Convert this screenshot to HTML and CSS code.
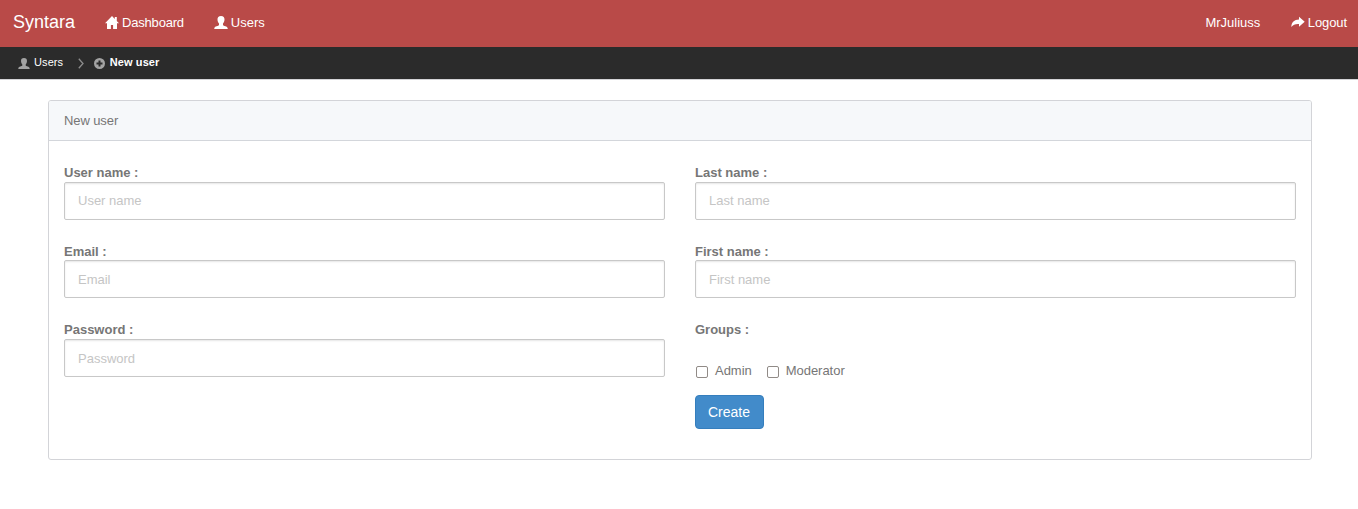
FILE: index.html
```html
<!DOCTYPE html>
<html lang="en">
<head>
<meta charset="utf-8">
<title>Syntara - New user</title>
<link rel="stylesheet" href="styles.css">
</head>
<body>
<svg class="symbols" aria-hidden="true">
  <symbol id="person" viewBox="0 0 14 13"><path d="M7 0C4.600 0 3.300 1.500 3.500 3.600c0 1.800.7 3.100 1.500 4v1.300C4.900 10 .3 10 .3 12.300V13h13.400v-.7C13.700 10 9.100 10 9 8.900V7.600c.8-.9 1.500-2.200 1.500-4C10.700 1.500 9.400 0 7 0z"/></symbol>
</svg>
<header class="navbar">
  <a class="brand">Syntara</a>
  <nav class="menu">
    <a class="link dashboard"><svg class="icon" viewBox="0 0 14 13"><path d="M7 0 0 7.300h2V13h3.900V9h2.200v4H12V7.300h2L11.800 5V1H9.800v2z"/></svg>Dashboard</a>
    <a class="link"><svg class="icon"><use href="#person"/></svg>Users</a>
  </nav>
  <nav class="menu account">
    <a class="link">MrJuliuss</a>
    <a class="link logout"><svg class="icon" viewBox="0 0 14 13"><path d="M8 .8 13.700 5.800 8 10.800V8C4.300 7.800 2.100 8.600.3 11 .5 6.500 3.200 3.700 8 3.600z"/></svg>Logout</a>
  </nav>
</header>
<div class="breadcrumb">
  <a class="crumb"><svg class="crumb-icon person"><use href="#person"/></svg>Users</a>
  <svg class="separator" viewBox="0 0 6 11"><path d="M.8.800 5 5.500.8 10.200"/></svg>
  <a class="crumb current"><svg class="crumb-icon" viewBox="0 0 11 11"><path fill-rule="evenodd" d="M5.500 0a5.500 5.500 0 1 1 0 11 5.500 5.500 0 0 1 0-11zM4.500 2.500v2h-2v2h2v2h2v-2h2v-2h-2v-2z"/></svg>New user</a>
</div>
<main class="panel">
  <h1 class="panel-title">New user</h1>
  <form class="form">
    <div class="column">
      <div class="field"><label class="label" for="username">User name :</label><input class="input" id="username" placeholder="User name"></div>
      <div class="field"><label class="label" for="email">Email :</label><input class="input" id="email" placeholder="Email"></div>
      <div class="field"><label class="label" for="password">Password :</label><input class="input password" id="password" type="password" placeholder="Password"></div>
    </div>
    <div class="column">
      <div class="field"><label class="label" for="last">Last name :</label><input class="input" id="last" placeholder="Last name"></div>
      <div class="field"><label class="label" for="first">First name :</label><input class="input" id="first" placeholder="First name"></div>
      <div class="label">Groups :</div>
      <div class="groups">
        <label class="option"><input class="check" type="checkbox">Admin</label>
        <label class="option"><input class="check" type="checkbox">Moderator</label>
      </div>
      <button class="create" type="button">Create</button>
    </div>
  </form>
</main>
</body>
</html>
```
FILE: styles.css
```css
* { box-sizing: border-box; }
body {
  margin: 0;
  background: #fff;
  color: #767676;
  font: 13px/18.5px "Liberation Sans", Arial, sans-serif;
}
.symbols { display: none; }
.navbar {
  display: flex;
  height: 47px;
  padding: 0 11px 2px 13px;
  align-items: center;
  background: #b94a48;
  color: #fff;
}
.brand { font-size: 18px; }
.menu { display: flex; gap: 30px; margin-left: 30px; }
.account { gap: 30.500px; margin-left: auto; }
.link { display: flex; align-items: center; padding-top: 1.500px; }
.dashboard { letter-spacing: -0.2px; }
.logout { letter-spacing: -0.1px; }
.icon { width: 14px; height: 13px; margin: 0 3px 1.500px 0; fill: #fff; }
.breadcrumb {
  display: flex;
  height: 33px;
  padding: 0 17px 2px 18px;
  align-items: center;
  background: #2b2b2b;
  border-bottom: 1px solid #d3d3d6;
  color: #fff;
  font-size: 11px;
  letter-spacing: 0.1px;
}
.crumb { display: flex; align-items: center; }
.crumb-icon { width: 11px; height: 11px; margin: 3px 5px 0 0; fill: #a3a3a3; }
.person { width: 12px; margin-right: 4px; }
.separator {
  width: 6px;
  height: 11px;
  margin: 2px 9.500px 0 15px;
  fill: none;
  stroke: #8c8c8c;
  stroke-width: 1.3;
}
.current { font-weight: bold; }
.panel {
  height: 360px;
  margin: 20px 46px 0 48px;
  border: 1px solid #d3d4d8;
  border-radius: 3px;
}
.panel-title {
  height: 40px;
  margin: 0;
  padding: 0 15px;
  border-bottom: 1px solid #d3d6db;
  background: #f6f8fa;
  border-radius: 2px 2px 0 0;
  font-size: 13px;
  font-weight: normal;
  letter-spacing: -0.1px;
  line-height: 39px;
}
.form {
  display: grid;
  grid-template-columns: 1fr 1fr;
  gap: 30px;
  padding: 23.200px 15px 0;
}
.field { height: 78.400px; }
.label { display: block; margin-bottom: -0.700px; font-weight: bold; }
.input {
  display: block;
  width: 100%;
  height: 38px;
  padding: 0 13px;
  border: 1px solid #c8c8c8;
  border-radius: 2px;
  background: #fff;
  box-shadow: inset 0 1px 2px rgba(0, 0, 0, 0.1);
  font: inherit;
}
.field:first-child .input { padding-bottom: 1px; }
.field .password { padding-top: 1px; }
.input::placeholder { color: #c5c5c5; }
.groups { display: flex; gap: 15px; padding: 23px 0 14.700px 1px; }
.option { display: flex; align-items: center; letter-spacing: -0.03px; }
.check {
  width: 12px;
  height: 12px;
  margin: 2px 7px 0 0;
  appearance: none;
  border: 1px solid #918b87;
  border-radius: 2px;
  background: #fff;
}
.create {
  display: block;
  width: 69px;
  height: 34px;
  padding: 0 1px 0 0;
  border: 1px solid #357ebd;
  border-radius: 4px;
  background: #428bca;
  color: #fff;
  font: 14px/20px "Liberation Sans", Arial, sans-serif;
}
```
